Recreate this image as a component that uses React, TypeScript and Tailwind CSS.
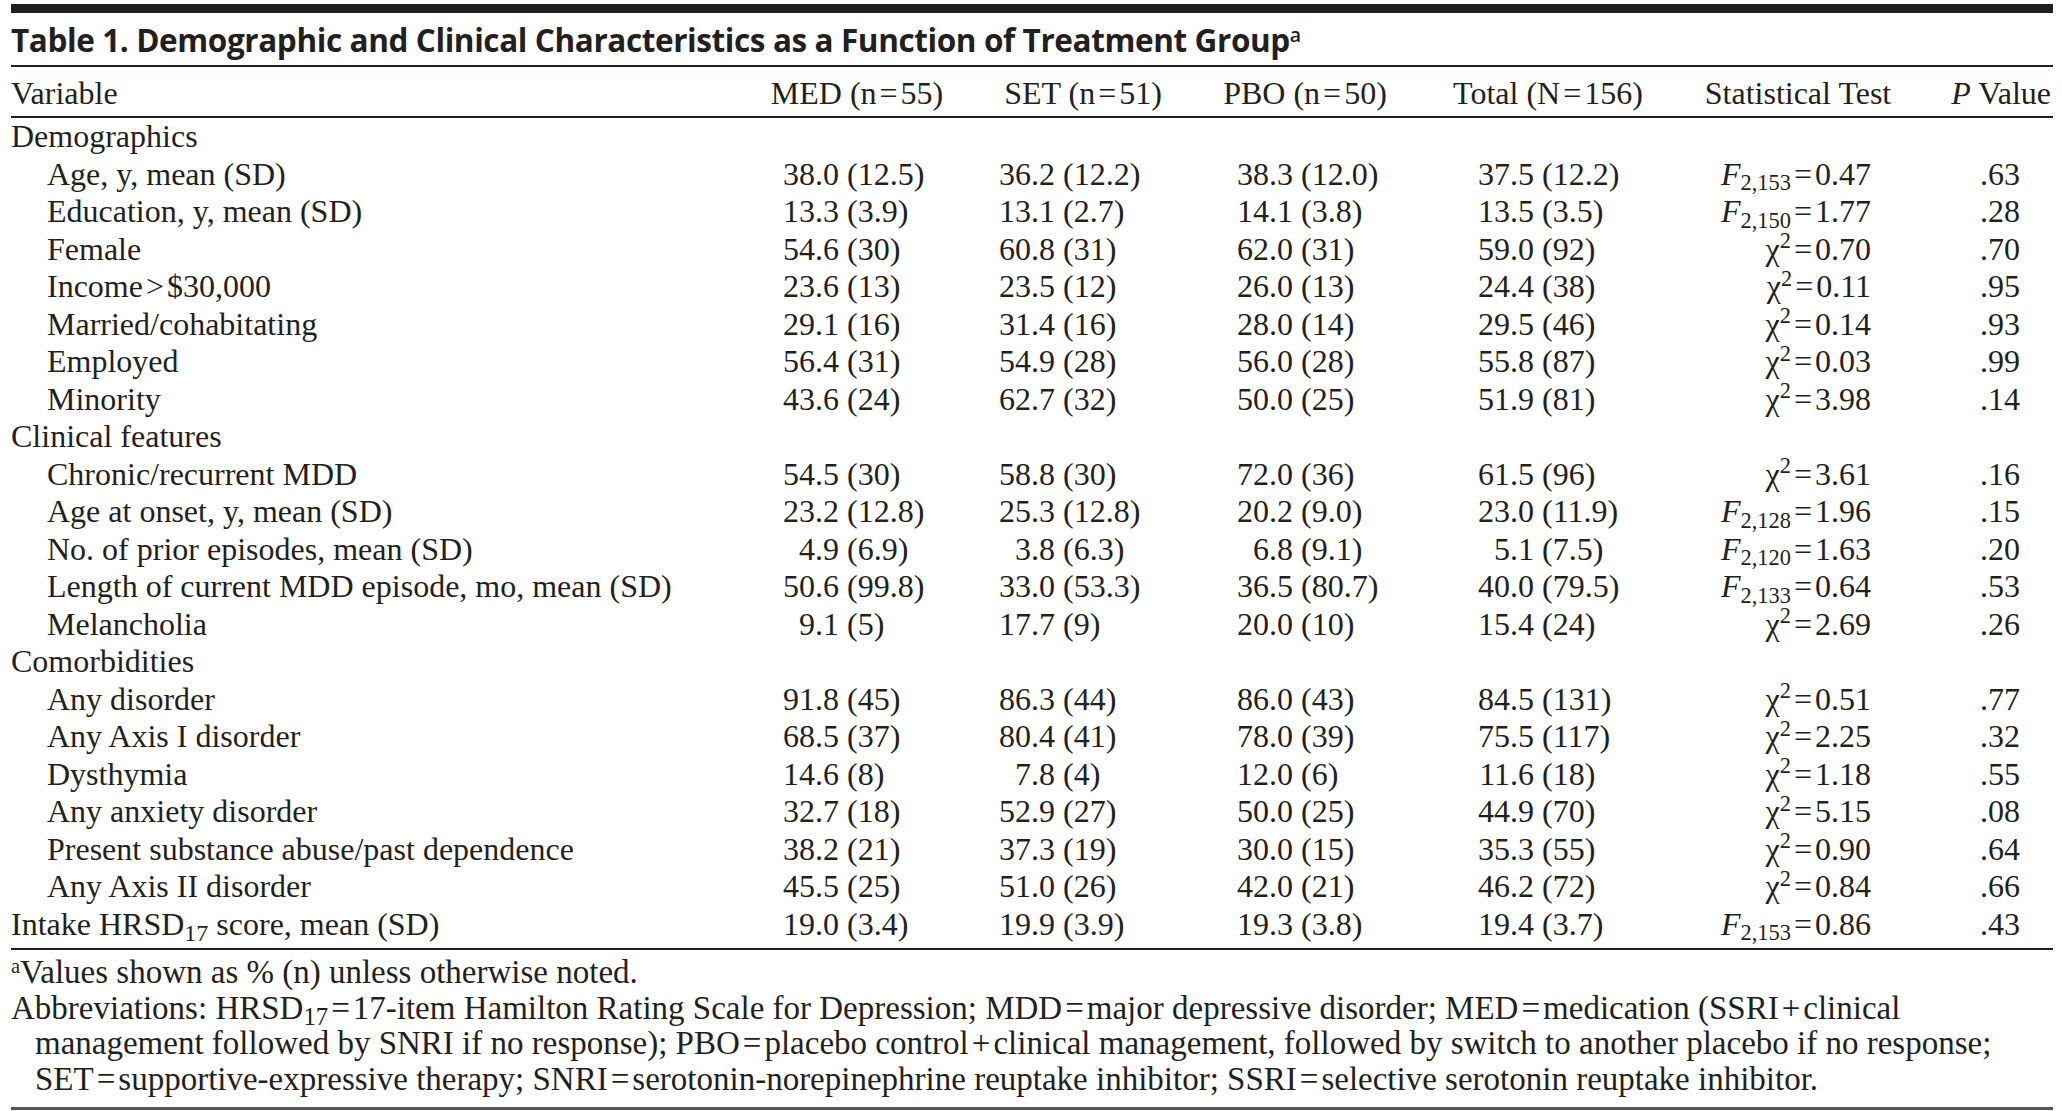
import React from "react";

type Stat = { kind: "F" | "chi"; sub?: string; v: string };
type Row =
  | { type: "section"; label: string }
  | { type: "data"; label: React.ReactNode; indent?: boolean; vals: string[]; test: Stat; p: string };

const serif = { fontFamily: '"Liberation Serif", "Times New Roman", serif' };

const f = (sub: string, v: string): Stat => ({ kind: "F", sub, v });
const c = (v: string): Stat => ({ kind: "chi", v });

const rows: Row[] = [
  { type: "section", label: "Demographics" },
  { type: "data", indent: true, label: "Age, y, mean (SD)", vals: ["38.0 (12.5)", "36.2 (12.2)", "38.3 (12.0)", "37.5 (12.2)"], test: f("2,153", "0.47"), p: ".63" },
  { type: "data", indent: true, label: "Education, y, mean (SD)", vals: ["13.3 (3.9)", "13.1 (2.7)", "14.1 (3.8)", "13.5 (3.5)"], test: f("2,150", "1.77"), p: ".28" },
  { type: "data", indent: true, label: "Female", vals: ["54.6 (30)", "60.8 (31)", "62.0 (31)", "59.0 (92)"], test: c("0.70"), p: ".70" },
  {
    type: "data",
    indent: true,
    label: (
      <>
        Income<Eq ch=">" />$30,000
      </>
    ),
    vals: ["23.6 (13)", "23.5 (12)", "26.0 (13)", "24.4 (38)"],
    test: c("0.11"),
    p: ".95",
  },
  { type: "data", indent: true, label: "Married/cohabitating", vals: ["29.1 (16)", "31.4 (16)", "28.0 (14)", "29.5 (46)"], test: c("0.14"), p: ".93" },
  { type: "data", indent: true, label: "Employed", vals: ["56.4 (31)", "54.9 (28)", "56.0 (28)", "55.8 (87)"], test: c("0.03"), p: ".99" },
  { type: "data", indent: true, label: "Minority", vals: ["43.6 (24)", "62.7 (32)", "50.0 (25)", "51.9 (81)"], test: c("3.98"), p: ".14" },
  { type: "section", label: "Clinical features" },
  { type: "data", indent: true, label: "Chronic/recurrent MDD", vals: ["54.5 (30)", "58.8 (30)", "72.0 (36)", "61.5 (96)"], test: c("3.61"), p: ".16" },
  { type: "data", indent: true, label: "Age at onset, y, mean (SD)", vals: ["23.2 (12.8)", "25.3 (12.8)", "20.2 (9.0)", "23.0 (11.9)"], test: f("2,128", "1.96"), p: ".15" },
  { type: "data", indent: true, label: "No. of prior episodes, mean (SD)", vals: ["4.9 (6.9)", "3.8 (6.3)", "6.8 (9.1)", "5.1 (7.5)"], test: f("2,120", "1.63"), p: ".20" },
  { type: "data", indent: true, label: "Length of current MDD episode, mo, mean (SD)", vals: ["50.6 (99.8)", "33.0 (53.3)", "36.5 (80.7)", "40.0 (79.5)"], test: f("2,133", "0.64"), p: ".53" },
  { type: "data", indent: true, label: "Melancholia", vals: ["9.1 (5)", "17.7 (9)", "20.0 (10)", "15.4 (24)"], test: c("2.69"), p: ".26" },
  { type: "section", label: "Comorbidities" },
  { type: "data", indent: true, label: "Any disorder", vals: ["91.8 (45)", "86.3 (44)", "86.0 (43)", "84.5 (131)"], test: c("0.51"), p: ".77" },
  { type: "data", indent: true, label: "Any Axis I disorder", vals: ["68.5 (37)", "80.4 (41)", "78.0 (39)", "75.5 (117)"], test: c("2.25"), p: ".32" },
  { type: "data", indent: true, label: "Dysthymia", vals: ["14.6 (8)", "7.8 (4)", "12.0 (6)", "11.6 (18)"], test: c("1.18"), p: ".55" },
  { type: "data", indent: true, label: "Any anxiety disorder", vals: ["32.7 (18)", "52.9 (27)", "50.0 (25)", "44.9 (70)"], test: c("5.15"), p: ".08" },
  { type: "data", indent: true, label: "Present substance abuse/past dependence", vals: ["38.2 (21)", "37.3 (19)", "30.0 (15)", "35.3 (55)"], test: c("0.90"), p: ".64" },
  { type: "data", indent: true, label: "Any Axis II disorder", vals: ["45.5 (25)", "51.0 (26)", "42.0 (21)", "46.2 (72)"], test: c("0.84"), p: ".66" },
  {
    type: "data",
    label: (
      <>
        Intake HRSD<sub>17</sub> score, mean (SD)
      </>
    ),
    vals: ["19.0 (3.4)", "19.9 (3.9)", "19.3 (3.8)", "19.4 (3.7)"],
    test: f("2,153", "0.86"),
    p: ".43",
  },
];

function Eq({ ch = "=" }: { ch?: string }) {
  return <span className="mx-[3px]">{ch}</span>;
}

// column boxes: width, left margin, where the decimal point sits
const groupCols = [
  { w: "w-[200px]", ml: "ml-0", dec: "w-[58px]" },
  { w: "w-[200px]", ml: "ml-[26px]", dec: "w-[48px]" },
  { w: "w-[200px]", ml: "ml-[22px]", dec: "w-[64px]" },
  { w: "w-[220px]", ml: "ml-[33px]", dec: "w-[72px]" },
];

function DecCell({ value, col }: { value: string; col: (typeof groupCols)[number] }) {
  const i = value.indexOf(".");
  return (
    <div className={`${col.w} ${col.ml} flex shrink-0`}>
      <span className={`${col.dec} shrink-0 text-right`}>{value.slice(0, i)}</span>
      <span className="whitespace-nowrap">{value.slice(i)}</span>
    </div>
  );
}

function StatCell({ s }: { s: Stat }) {
  return (
    <div className="ml-[40px] w-[200px] shrink-0 whitespace-nowrap pr-[27px] text-right">
      {s.kind === "F" ? (
        <>
          <span className="italic">F</span>
          <sub className="text-[0.7em]">{s.sub}</sub>
        </>
      ) : (
        <>
          χ<sup className="text-[0.7em]">2</sup>
        </>
      )}
      <Eq />
      {s.v}
    </div>
  );
}

export default function App() {
  return (
    <div className="min-h-screen bg-white text-[#231f20]" style={serif}>
      <div className="ml-[11px] w-[2042px] pt-[4px]">
        <div className="h-[9px] bg-[#231f20]" />

        <div
          className="flex h-[52px] items-end pb-[10px] text-[31.5px] font-bold leading-none tracking-[-0.4px]"
          style={{ fontFamily: '"Open Sans", "Noto Sans", sans-serif' }}
        >
          <span>
            Table 1. Demographic and Clinical Characteristics as a Function of Treatment Group
            <sup className="text-[0.62em] font-semibold">a</sup>
          </span>
        </div>
        <div className="h-[2px] bg-[#231f20]" />

        <div className="flex h-[49px] pt-[8px] text-[32px] leading-[37.5px] whitespace-nowrap">
          <div className="w-[746px] shrink-0">Variable</div>
          <div className="w-[200px] shrink-0 text-center">
            MED (n<Eq />55)
          </div>
          <div className="ml-[26px] w-[200px] shrink-0 text-center">
            SET (n<Eq />51)
          </div>
          <div className="ml-[22px] w-[200px] shrink-0 text-center">
            PBO (n<Eq />50)
          </div>
          <div className="ml-[33px] w-[220px] shrink-0 text-center">
            Total (N<Eq />156)
          </div>
          <div className="ml-[40px] w-[200px] shrink-0 text-center">Statistical Test</div>
          <div className="w-[155px] shrink-0 pr-[2px] text-right">
            <span className="italic">P</span> Value
          </div>
        </div>
        <div className="h-[2px] bg-[#231f20]" />

        <div className="pb-[5px] text-[32px] leading-[37.5px]">
          {rows.map((r, idx) =>
            r.type === "section" ? (
              <div key={idx} className="h-[37.5px] whitespace-nowrap">
                {r.label}
              </div>
            ) : (
              <div key={idx} className="flex h-[37.5px] whitespace-nowrap">
                <div className={`w-[746px] shrink-0 ${r.indent ? "pl-[36px]" : ""}`}>{r.label}</div>
                {r.vals.map((v, j) => (
                  <DecCell key={j} value={v} col={groupCols[j]} />
                ))}
                <StatCell s={r.test} />
                <div className="w-[155px] shrink-0 pr-[33px] text-right">{r.p}</div>
              </div>
            ),
          )}
        </div>
        <div className="h-[2px] bg-[#231f20]" />

        <div className="h-[157px] pt-[5px] text-[33px] leading-[35.7px] whitespace-nowrap">
          <div>
            <sup className="text-[0.62em]">a</sup>Values shown as % (n) unless otherwise noted.
          </div>
          <div>
            Abbreviations: HRSD<sub>17</sub>
            <Eq />
            17-item Hamilton Rating Scale for Depression; MDD
            <Eq />
            major depressive disorder; MED
            <Eq />
            medication (SSRI
            <Eq ch="+" />
            clinical
          </div>
          <div className="pl-[24px]">
            management followed by SNRI if no response); PBO
            <Eq />
            placebo control
            <Eq ch="+" />
            clinical management, followed by switch to another placebo if no response;
          </div>
          <div className="pl-[24px]">
            SET
            <Eq />
            supportive-expressive therapy; SNRI
            <Eq />
            serotonin-norepinephrine reuptake inhibitor; SSRI
            <Eq />
            selective serotonin reuptake inhibitor.
          </div>
        </div>
        <div className="h-[3px] bg-[#555]" />
      </div>
    </div>
  );
}
